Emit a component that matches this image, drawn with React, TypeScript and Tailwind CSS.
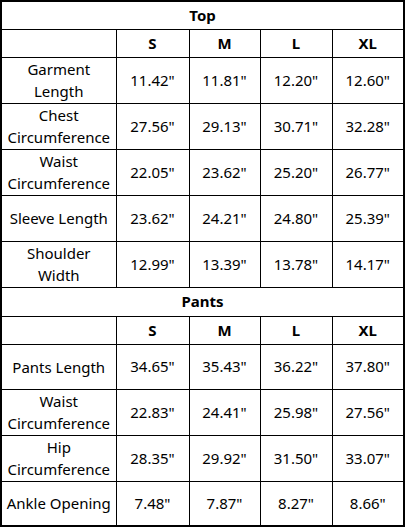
import React from "react";

const topRows: [string, string[], number][] = [
  ["Garment Length", ["11.42\"", "11.81\"", "12.20\"", "12.60\""], 46],
  ["Chest Circumference", ["27.56\"", "29.13\"", "30.71\"", "32.28\""], 46],
  ["Waist Circumference", ["22.05\"", "23.62\"", "25.20\"", "26.77\""], 46],
  ["Sleeve Length", ["23.62\"", "24.21\"", "24.80\"", "25.39\""], 46],
  ["Shoulder Width", ["12.99\"", "13.39\"", "13.78\"", "14.17\""], 46],
];

const pantsRows: [string, string[], number][] = [
  ["Pants Length", ["34.65\"", "35.43\"", "36.22\"", "37.80\""], 45],
  ["Waist Circumference", ["22.83\"", "24.41\"", "25.98\"", "27.56\""], 46],
  ["Hip Circumference", ["28.35\"", "29.92\"", "31.50\"", "33.07\""], 46],
  ["Ankle Opening", ["7.48\"", "7.87\"", "8.27\"", "8.66\""], 45],
];

function Section({ title, rows, titleH }: { title: string; rows: [string, string[], number][]; titleH: number }) {
  return (
    <>
      <tr style={{ height: titleH }}>
        <td colSpan={5} className="border border-black text-center font-bold">
          {title}
        </td>
      </tr>
      <tr className="h-[28px]">
        <td className="border border-black"></td>
        {["S", "M", "L", "XL"].map((s) => (
          <td key={s} className="border border-black text-center font-bold">
            {s}
          </td>
        ))}
      </tr>
      {rows.map(([label, vals, h]) => (
        <tr key={label} style={{ height: h }}>
          <td className="border border-black text-center px-1 leading-[22px]">{label}</td>
          {vals.map((v, i) => (
            <td key={i} className="border border-black text-center">
              {v}
            </td>
          ))}
        </tr>
      ))}
    </>
  );
}

export default function App() {
  return (
    <div className="w-[405px] h-[528px] bg-white" style={{ fontFamily: "'Noto Sans', 'Open Sans', sans-serif" }}>
      <table className="border-collapse text-[15px] text-black table-fixed w-[403px] border-2 border-black">
        <colgroup>
          <col className="w-[115px]" />
          <col className="w-[73px]" />
          <col className="w-[71px]" />
          <col className="w-[72px]" />
          <col className="w-[72px]" />
        </colgroup>
        <tbody>
          <Section title="Top" rows={topRows} titleH={28} />
          <Section title="Pants" rows={pantsRows} titleH={29} />
        </tbody>
      </table>
    </div>
  );
}
